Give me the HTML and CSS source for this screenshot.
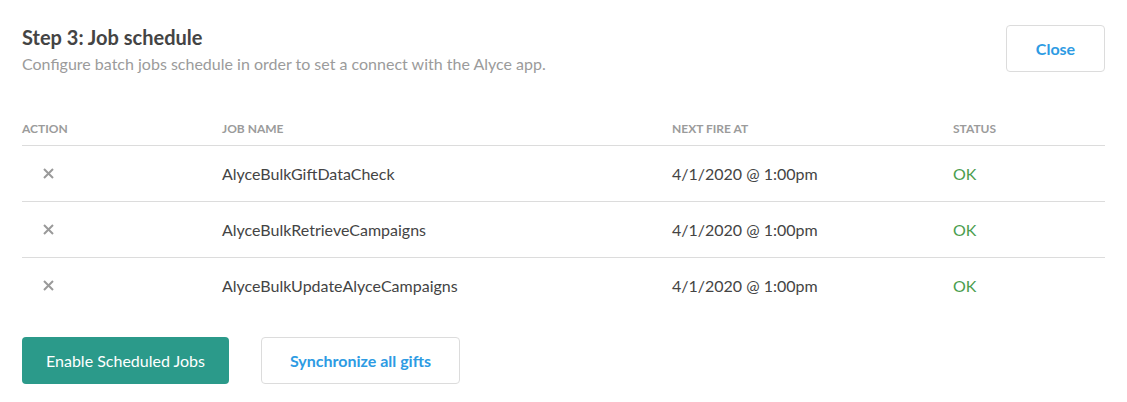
FILE: index.html
```html
<!DOCTYPE html>
<html>

<head>
    <title>Job schedule</title>
    <meta charset="utf-8">
    <link rel="stylesheet" href="styles.css">
</head>

<body>

    <div class="panel">
        <div class="top">
            <div>
                <h1>Step 3: Job schedule</h1>
                <p class="sub">Configure batch jobs schedule in order to set a connect with the Alyce app.</p>
            </div>
            <button class="btn hvid">Close</button>
        </div>

        <table class="jobs">
            <thead>
                <tr>
                    <th class="c1">Action</th>
                    <th class="c2">Job name</th>
                    <th class="c3">Next fire at</th>
                    <th>Status</th>
                </tr>
            </thead>
            <tbody id="liste"></tbody>
        </table>

        <div class="bund">
            <button class="btn groen">Enable Scheduled Jobs</button>
            <button class="btn hvid">Synchronize all gifts</button>
        </div>
    </div>

    <script>
        let jobs = ["AlyceBulkGiftDataCheck", "AlyceBulkRetrieveCampaigns", "AlyceBulkUpdateAlyceCampaigns"];
        let dest = document.querySelector("#liste");

        jobs.forEach(job => {
            let template = `<tr>
                <td><svg class="kryds" width="11" height="11" viewBox="0 0 11 11"><path d="M1 1L10 10M10 1L1 10" stroke="#9a9a9a" stroke-width="2"/></svg></td>
                <td>${job}</td>
                <td>4/1/2020 @ 1:00pm</td>
                <td class="ok">OK</td>
            </tr>`;
            dest.insertAdjacentHTML("beforeend", template);
        })
    </script>

</body>

</html>
```

FILE: styles.css
```css
body {
    margin: 0;
    font-family: Lato, "Open Sans", sans-serif;
    color: #444;
    background-color: #ffffff;
}

.panel {
    padding: 25px 22px 0 22px;
}

.top {
    display: flex;
    justify-content: space-between;
    align-items: flex-start;
}

h1 {
    font-size: 20px;
    font-weight: bold;
    margin: 0;
    padding-top: 0;
    line-height: 24px;
    color: #444;
}

.sub {
    margin: 4px 0 0 0;
    font-size: 16px;
    color: #9b9b9b;
    line-height: 22px;
}

.btn {
    font-family: Lato, "Open Sans", sans-serif;
    font-size: 16px;
    height: 47px;
    border-radius: 4px;
    cursor: pointer;
}

.hvid {
    background-color: #ffffff;
    border: 1px solid #dcdcdc;
    color: #2d9be3;
    font-weight: bold;
    width: 99px;
}

.bund .hvid {
    width: 199px;
}

.groen {
    background-color: #2b9a8a;
    border: none;
    color: #ffffff;
    width: 207px;
}

.jobs {
    width: 100%;
    border-collapse: collapse;
    margin-top: 46px;
}

.jobs th {
    text-align: left;
    font-size: 12px;
    font-weight: bold;
    color: #9b9b9b;
    text-transform: uppercase;
    padding: 0 0 9px 0;
    border-bottom: 1px solid #dcdcdc;
}

.c1 {
    width: 200px;
}

.c2 {
    width: 450px;
}

.c3 {
    width: 281px;
}

.jobs td {
    height: 55px;
    font-size: 16px;
    color: #444;
    border-bottom: 1px solid #dcdcdc;
    padding: 0;
}

.jobs tr:last-child td {
    border-bottom: none;
}

.kryds {
    margin-left: 21px;
    display: block;
}

.jobs td.ok {
    color: #4a9d4e;
}

.bund {
    display: flex;
    gap: 32px;
    margin-top: 24px;
}
```
